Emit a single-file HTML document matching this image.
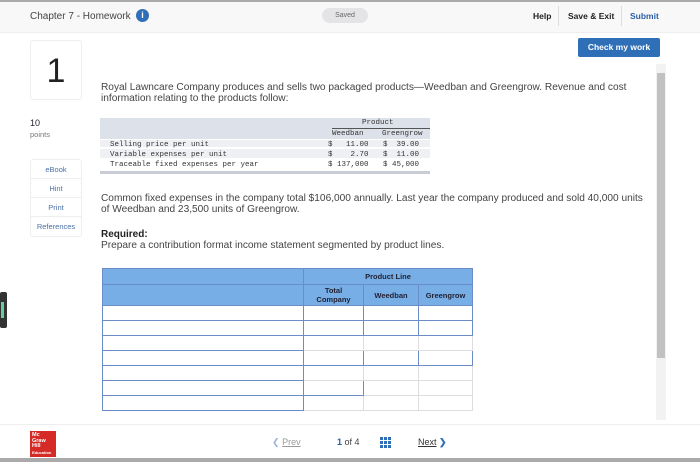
<!DOCTYPE html>
<html><head><style>
*{margin:0;padding:0;box-sizing:border-box}
body{width:700px;height:462px;overflow:hidden;background:#fff;font-family:"Liberation Sans",sans-serif;position:relative;color:#333}
.a{position:absolute}
.mono{font-family:"Liberation Mono",monospace;font-size:7.5px;color:#333}
.side div{height:19px;border-bottom:1px solid #eee;text-align:center;font-size:7.5px;color:#4a6fa5;line-height:19px}
td{border:1px solid #6b8cc7;height:15px;padding:0}
.p{font-size:10.15px;line-height:11px;color:#444;white-space:nowrap}
</style></head><body>
<div class="a" style="left:0;top:0;width:700px;height:2px;background:#aaa"></div>
<div class="a" style="left:0;top:2px;width:700px;height:31px;background:#f8f8f8;border-bottom:1px solid #eee"></div>
<div class="a" style="left:30px;top:11px;font-size:10px;color:#444">Chapter 7 - Homework</div>
<div class="a" style="left:136px;top:9px;width:13px;height:13px;border-radius:50%;background:#2e6fb8;color:#fff;font-size:9px;font-weight:bold;text-align:center;line-height:13px">i</div>
<div class="a" style="left:322px;top:8px;width:46px;height:15px;border-radius:8px;background:#e4e4e6;font-size:7px;color:#666;text-align:center;line-height:15px">Saved</div>
<div class="a" style="left:533px;top:11px;font-size:8.5px;font-weight:bold;color:#222">Help</div>
<div class="a" style="left:558px;top:6px;width:1px;height:20px;background:#ddd"></div>
<div class="a" style="left:568px;top:11px;font-size:8.5px;font-weight:bold;color:#222">Save &amp; Exit</div>
<div class="a" style="left:621px;top:6px;width:1px;height:20px;background:#ddd"></div>
<div class="a" style="left:630px;top:11px;font-size:8.5px;font-weight:bold;color:#2a5fa8">Submit</div>
<div class="a" style="left:578px;top:38px;width:82px;height:19px;background:#2e6fb8;border-radius:2px;color:#fff;font-size:8.5px;font-weight:bold;text-align:center;line-height:19px">Check my work</div>
<div class="a" style="left:30px;top:40px;width:52px;height:60px;border:1px solid #eee;border-radius:3px;font-size:34px;text-align:center;line-height:60px;color:#222">1</div>
<div class="a" style="left:30px;top:118px;font-size:9px;color:#223">10</div>
<div class="a" style="left:30px;top:130px;font-size:7.5px;color:#777">points</div>
<div class="a side" style="left:30px;top:159px;width:52px;border:1px solid #eee;border-radius:3px"><div>eBook</div><div>Hint</div><div>Print</div><div style="border:0">References</div></div>
<div class="a" style="left:0;top:292px;width:7px;height:36px;background:#333;border-radius:2px"><div style="margin:10px 0 0 1px;width:3px;height:16px;background:#6c9"></div></div>
<div class="a p" style="left:101px;top:82px">Royal Lawncare Company produces and sells two packaged products—Weedban and Greengrow. Revenue and cost<br>information relating to the products follow:</div>
<div class="a" style="left:100px;top:118px;width:330px;height:57px;background:#fff">
<div class="a" style="left:0;top:0;width:330px;height:21px;background:#dde1ea"></div>
<div class="a" style="left:0;top:22px;width:330px;height:7px;background:#eef0f4"></div>
<div class="a" style="left:0;top:31px;width:330px;height:9px;background:#eef0f4"></div>
<div class="a" style="left:0;top:53px;width:330px;height:3px;background:#c9ccd4"></div>
<div class="a" style="left:232px;top:10px;width:98px;height:1px;background:#555"></div>
<div class="a mono" style="left:262px;top:1px">Product</div>
<div class="a mono" style="left:232px;top:12px">Weedban</div>
<div class="a mono" style="left:282px;top:12px">Greengrow</div>
<div class="a mono" style="left:10px;top:22px;line-height:10px;white-space:pre">Selling price per unit
Variable expenses per unit
Traceable fixed expenses per year</div>
<div class="a mono" style="left:228px;top:22px;line-height:10px;white-space:pre">$   11.00
$    2.70
$ 137,000</div>
<div class="a mono" style="left:283px;top:22px;line-height:10px;white-space:pre">$  39.00
$  11.00
$ 45,000</div>
</div>
<div class="a p" style="left:101px;top:193px">Common fixed expenses in the company total $106,000 annually. Last year the company produced and sold 40,000 units<br>of Weedban and 23,500 units of Greengrow.</div>
<div class="a" style="left:101px;top:229px;font-size:10px;font-weight:bold;color:#222">Required:</div>
<div class="a p" style="left:101px;top:240px">Prepare a contribution format income statement segmented by product lines.</div>
<table class="a" style="left:102px;top:268px;width:371px;border-collapse:collapse;font-size:7.5px;font-weight:bold;color:#223;text-align:center">
<tr style="background:#78aee6"><td style="width:201px;height:16px"></td><td colspan="3">Product Line</td></tr>
<tr style="background:#78aee6"><td style="height:21px"></td><td style="width:60px;line-height:9px">Total<br>Company</td><td style="width:55px">Weedban</td><td>Greengrow</td></tr>
<tr><td></td><td></td><td></td><td></td></tr>
<tr><td></td><td></td><td></td><td></td></tr>
<tr><td></td><td style="border-color:#ddd"></td><td style="border-color:#ddd"></td><td style="border-color:#ddd"></td></tr>
<tr><td></td><td></td><td></td><td></td></tr>
<tr><td></td><td style="border-color:#ddd"></td><td style="border-color:#ddd"></td><td style="border-color:#ddd"></td></tr>
<tr><td></td><td></td><td style="border-color:#ddd"></td><td style="border-color:#ddd"></td></tr>
<tr><td></td><td style="border-color:#ddd"></td><td style="border-color:#ddd"></td><td style="border-color:#ddd"></td></tr>
</table>
<div class="a" style="left:656px;top:64px;width:10px;height:356px;background:#f2f2f2"></div>
<div class="a" style="left:657px;top:73px;width:8px;height:285px;background:#c1c1c1"></div>
<div class="a" style="left:0;top:424px;width:700px;height:1px;background:#eee"></div>
<div class="a" style="left:30px;top:431px;width:26px;height:26px;background:#d42b27;color:#fff;font-size:5.5px;font-weight:bold;line-height:5.5px;padding:2px">Mc<br>Graw<br>Hill<br><span style="font-size:4px">Education</span></div>
<div class="a" style="left:272px;top:437px;font-size:9px;color:#999"><span style="color:#9bb5d8">&#10094;</span> <u>Prev</u></div>
<div class="a" style="left:337px;top:437px;font-size:9px;color:#444"><b style="color:#2a5fa8">1</b> of 4</div>
<div class="a" style="left:380px;top:437px;width:11px;height:11px;background:repeating-linear-gradient(90deg,#2e6fb8 0 3px,transparent 3px 4px),#fff;-webkit-mask:repeating-linear-gradient(0deg,#000 0 3px,transparent 3px 4px)"></div>
<div class="a" style="left:418px;top:437px;font-size:9px;color:#333"><u>Next</u> <b style="color:#2e6fb8">&#10095;</b></div>
<div class="a" style="left:0;top:458px;width:700px;height:4px;background:#aaa"></div>
</body></html>
